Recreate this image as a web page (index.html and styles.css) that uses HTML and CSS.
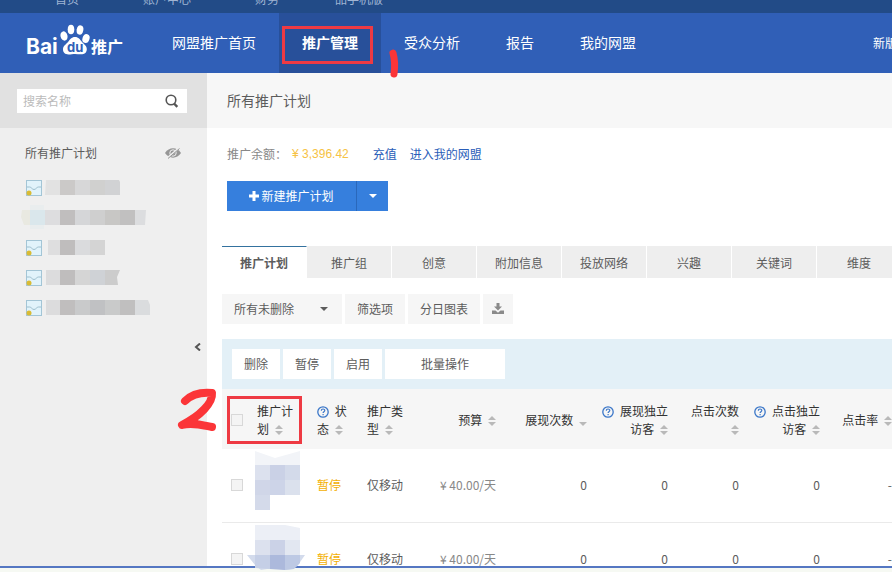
FILE: index.html
```html
<!DOCTYPE html>
<html lang="zh-CN">
<head>
    <meta charset="UTF-8">
    <meta name="viewport" content="width=device-width, initial-scale=1.0">
    <title>百度推广 - 推广管理</title>
    <link rel="stylesheet" href="styles.css">
</head>
<body>
    <!-- Shared icons -->
    <svg class="sprite" aria-hidden="true">
        <symbol id="icon-plan" viewBox="0 0 16 16">
            <rect x="0.5" y="0.5" width="15" height="15" fill="#e1f3fb" stroke="#a3c5d6"/>
            <path d="M1 7h2.500c2 0 2.500 2.500 4.500 2.500S10.500 7 12.500 7H15" fill="none" stroke="#9dbfce"/>
            <circle cx="3" cy="13" r="2.500" fill="#d9bb34"/>
        </symbol>
        <symbol id="icon-sort" viewBox="0 0 8 10">
            <path d="M4 0l4 4H0zM4 10L0 6h8z" fill="#b9b9b9"/>
        </symbol>
        <symbol id="icon-sort-desc" viewBox="0 0 8 10">
            <path d="M4 10L0 6h8z" fill="#b9b9b9"/>
        </symbol>
        <symbol id="icon-help" viewBox="0 0 12 12">
            <circle cx="6" cy="6" r="5.200" fill="none" stroke="#3a76c8" stroke-width="1.300"/>
            <path d="M4.300 4.700c0-2.200 3.500-2.200 3.500-.2 0 1.200-1.700 1.200-1.700 2.500M6.100 8v1.200" fill="none" stroke="#3a76c8" stroke-width="1.200"/>
        </symbol>
    </svg>

    <div class="topbar">
        <a href="#">首页</a>
        <a href="#">账户中心</a>
        <a href="#">财务</a>
        <a class="mobile" href="#">品手机版</a>
    </div>

    <header class="header">
        <a class="logo" href="#" aria-label="百度推广">
            <svg width="98" height="34" viewBox="0 3 98 34">
                <g fill="#fff">
                    <text class="logo-latin" x="-1" y="31">Bai</text>
                    <ellipse cx="37" cy="13" rx="3.500" ry="4.700" transform="rotate(-14 37 13)"/>
                    <ellipse cx="44" cy="6.500" rx="3.300" ry="4.700"/>
                    <ellipse cx="53" cy="7" rx="3.300" ry="4.700" transform="rotate(12 53 7)"/>
                    <ellipse cx="59" cy="15.500" rx="3.500" ry="4.600" transform="rotate(18 59 15.500)"/>
                    <path d="M48 14c3.500 0 5 2.500 7 5 2.500 2.700 5 4 4.800 7.500-.3 4-3.300 5-6 4.800-2-.1-3.800-.4-5.800-.4s-4 .6-6.500.6c-3.500 0-5.500-2-5.500-5.200 0-3.500 3-4.800 5.200-7.500 1.800-2.300 3.300-4.800 6.800-4.800z"/>
                    <text class="logo-cn" x="64" y="30">推广</text>
                </g>
                <text class="logo-du" x="40" y="29">du</text>
            </svg>
        </a>
        <nav class="nav">
            <a href="#">网盟推广首页</a>
            <a class="active" href="#">推广管理</a>
            <a href="#">受众分析</a>
            <a href="#">报告</a>
            <a href="#">我的网盟</a>
        </nav>
        <a class="new-version" href="#">新版</a>
    </header>

    <div class="layout">
        <aside class="sidebar">
            <form class="search">
                <input type="text" placeholder="搜索名称" aria-label="搜索名称">
                <button type="button" aria-label="搜索">
                    <svg width="14" height="14" viewBox="0 0 14 14" fill="none" stroke="#555">
                        <circle cx="6" cy="6" r="4.800" stroke-width="1.600"/>
                        <path d="M9 9.500l3.300 3.300" stroke-width="2.400"/>
                    </svg>
                </button>
            </form>
            <div class="side-title">
                <span>所有推广计划</span>
                <svg width="16" height="12" viewBox="0 0 16 12">
                    <path d="M0 6c4-6.200 12-6.200 16 0-4 6.200-12 6.200-16 0z" fill="#969696"/>
                    <circle cx="8" cy="6" r="3.200" fill="none" stroke="#efefef"/>
                    <path d="M2.500 11L14 1" stroke="#efefef" stroke-width="2"/>
                    <path d="M3 11.500L14.500 1.500" stroke="#969696"/>
                </svg>
            </div>
            <ul class="plan-list">
                <li>
                    <svg width="16" height="16"><use href="#icon-plan"/></svg>
                    <svg width="75" height="15">
                        <path d="M1 0h14v15H0z" fill="#e2e2e2"/>
                        <path d="M15 0h15v15H15z" fill="#cbc9c8"/>
                        <path d="M30 0h15v15H30z" fill="#d7d7d8"/>
                        <path d="M45 0h15v15H45z" fill="#d0d0cf"/>
                        <path d="M60 0h14l1 2v13H60z" fill="#d1d2d4"/>
                    </svg>
                </li>
                <li class="masked">
                    <svg width="125" height="24">
                        <path d="M1 5h8v15H3L0 12z" fill="#e9e9e1"/>
                        <path d="M9 0h14v24H9z" fill="#e9edee"/>
                        <path d="M9 5h15v15H9z" fill="#dae7ec"/>
                        <path d="M24 5h15v15H24z" fill="#dddddf"/>
                        <path d="M39 5h15v15H39z" fill="#c0bebe"/>
                        <path d="M54 5h15v15H54z" fill="#d5d6d8"/>
                        <path d="M69 5h15v15H69z" fill="#cfcfcf"/>
                        <path d="M84 5h15v15H84z" fill="#c8c7c5"/>
                        <path d="M99 5h15v15H99z" fill="#c1c0c0"/>
                        <path d="M114 5h11l-1 15h-10z" fill="#dcdddf"/>
                    </svg>
                </li>
                <li>
                    <svg width="16" height="16"><use href="#icon-plan"/></svg>
                    <svg width="60" height="15">
                        <path d="M3 0h12v15H3z" fill="#dededf"/>
                        <path d="M15 0h15v15H15z" fill="#bfbdbd"/>
                        <path d="M30 0h15v15H30z" fill="#dadbdd"/>
                        <path d="M45 0h15v15H45z" fill="#d4d4d4"/>
                    </svg>
                </li>
                <li>
                    <svg width="16" height="16"><use href="#icon-plan"/></svg>
                    <svg width="75" height="15">
                        <path d="M1 0h14v15H1z" fill="#dcdcdd"/>
                        <path d="M15 0h15v15H15z" fill="#bfbdbd"/>
                        <path d="M30 0h15v15H30z" fill="#d5d5d5"/>
                        <path d="M45 0h15v15H45z" fill="#cfd2d6"/>
                        <path d="M60 0h15l-3 7 1 8H60z" fill="#cccccc"/>
                    </svg>
                </li>
                <li>
                    <svg width="16" height="16"><use href="#icon-plan"/></svg>
                    <svg width="105" height="15">
                        <path d="M1 0h14v15H1z" fill="#dcdcdd"/>
                        <path d="M15 0h15v15H15z" fill="#c0bebe"/>
                        <path d="M30 0h15v15H30z" fill="#c9cacb"/>
                        <path d="M45 0h15v15H45z" fill="#c0c1c3"/>
                        <path d="M60 0h15v15H60z" fill="#c9caca"/>
                        <path d="M75 0h15v15H75z" fill="#c0bfbf"/>
                        <path d="M90 0h13l2 5v10H90z" fill="#dadcde"/>
                    </svg>
                </li>
            </ul>
            <button class="collapse" type="button" aria-label="收起">
                <svg width="7" height="8" viewBox="0 0 7 8"><path d="M6 .5L2 4l4 3.500" fill="none" stroke="#555" stroke-width="2"/></svg>
            </button>
        </aside>

        <main class="main">
            <h1 class="page-title">所有推广计划</h1>

            <div class="balance">
                <span>推广余额：</span>
                <span class="amount">¥ 3,396.42</span>
                <a href="#">充值</a>
                <a href="#">进入我的网盟</a>
            </div>

            <div class="create">
                <button class="create-main" type="button">
                    <svg width="10" height="10" viewBox="0 0 10 10"><path d="M5 0v10M0 5h10" stroke="#fff" stroke-width="3"/></svg>
                    <span>新建推广计划</span>
                </button>
                <button class="create-more" type="button" aria-label="更多"><span class="caret"></span></button>
            </div>

            <nav class="tabs">
                <a class="active" href="#">推广计划</a>
                <a href="#">推广组</a>
                <a href="#">创意</a>
                <a href="#">附加信息</a>
                <a href="#">投放网络</a>
                <a href="#">兴趣</a>
                <a href="#">关键词</a>
                <a href="#">维度</a>
            </nav>

            <div class="filters">
                <div class="select">
                    <select aria-label="状态筛选">
                        <option>所有未删除</option>
                    </select>
                    <span class="caret"></span>
                </div>
                <button type="button">筛选项</button>
                <button type="button">分日图表</button>
                <button class="download" type="button" aria-label="下载">
                    <svg width="12" height="12" viewBox="0 0 12 12" fill="#8a8a8a">
                        <path d="M4.500 0h3v3.500H10L6 7.500 2 3.500h2.500z"/>
                        <path d="M0 7.500h3.500L6 9.700l2.500-2.200H12V11H0z"/>
                    </svg>
                </button>
            </div>

            <div class="actions">
                <button type="button">删除</button>
                <button type="button">暂停</button>
                <button type="button">启用</button>
                <button class="batch" type="button">批量操作</button>
            </div>

            <table class="plans">
                <colgroup>
                    <col class="col-check">
                    <col class="col-name">
                    <col class="col-status">
                    <col class="col-type">
                    <col class="col-budget">
                    <col class="col-shows">
                    <col class="col-visitors">
                    <col class="col-clicks">
                    <col class="col-visitors">
                    <col class="col-rate">
                </colgroup>
                <thead>
                    <tr>
                        <th class="check"><input type="checkbox" aria-label="全选"></th>
                        <th>推广计<br>划 <svg class="sort"><use href="#icon-sort"/></svg></th>
                        <th><svg class="help"><use href="#icon-help"/></svg> 状<br>态 <svg class="sort"><use href="#icon-sort"/></svg></th>
                        <th>推广类<br>型 <svg class="sort"><use href="#icon-sort"/></svg></th>
                        <th class="num">预算 <svg class="sort"><use href="#icon-sort"/></svg></th>
                        <th class="num">展现次数 <svg class="sort"><use href="#icon-sort-desc"/></svg></th>
                        <th class="num"><svg class="help"><use href="#icon-help"/></svg> 展现独立<br>访客 <svg class="sort"><use href="#icon-sort"/></svg></th>
                        <th class="num">点击次数<br><svg class="sort"><use href="#icon-sort"/></svg></th>
                        <th class="num"><svg class="help"><use href="#icon-help"/></svg> 点击独立<br>访客 <svg class="sort"><use href="#icon-sort"/></svg></th>
                        <th class="num">点击率 <svg class="sort"><use href="#icon-sort"/></svg></th>
                    </tr>
                </thead>
                <tbody>
                    <tr>
                        <td class="check"><input type="checkbox" aria-label="选择计划一"></td>
                        <td class="name">
                            <svg width="50" height="60">
                                <path d="M5 0l20 7 25-7v15H5z" fill="#f2f4f8"/>
                                <path d="M5 14h15v15H5z" fill="#dce1ee"/>
                                <path d="M20 14h15v15H20z" fill="#cad1e6"/>
                                <path d="M35 14h15v15H35z" fill="#d3daea"/>
                                <path d="M5 29h15v15H5z" fill="#d0d6e8"/>
                                <path d="M20 29h15v15H20z" fill="#cdd4e8"/>
                                <path d="M35 29h15v15H35z" fill="#dbe1ed"/>
                                <path d="M5 44h15v15H5z" fill="#d4daea"/>
                            </svg>
                        </td>
                        <td class="paused">暂停</td>
                        <td>仅移动</td>
                        <td class="num budget">¥ 40.00/天</td>
                        <td class="num">0</td>
                        <td class="num">0</td>
                        <td class="num">0</td>
                        <td class="num">0</td>
                        <td class="num">-</td>
                    </tr>
                    <tr>
                        <td class="check"><input type="checkbox" aria-label="选择计划二"></td>
                        <td class="name">
                            <svg width="50" height="60">
                                <path d="M5 0h30l15 3v12H5z" fill="#eceff6"/>
                                <path d="M5 15h15v15H5z" fill="#dce1ee"/>
                                <path d="M20 15h15v15H20z" fill="#cbd2e7"/>
                                <path d="M35 15h15v15H35z" fill="#e2e7f1"/>
                                <path d="M-3 30h58l-7 10-5 4-8 1-12-2-12 2-6-5z" fill="#d3dbec"/>
                                <path d="M5 30h15v14L5 43z" fill="#c5cfe6"/>
                                <path d="M20 30h15v15l-15-1z" fill="#acb9dc"/>
                                <path d="M35 30h15v8l-6 6-9 1z" fill="#bdc9e4"/>
                            </svg>
                        </td>
                        <td class="paused">暂停</td>
                        <td>仅移动</td>
                        <td class="num budget">¥ 40.00/天</td>
                        <td class="num">0</td>
                        <td class="num">0</td>
                        <td class="num">0</td>
                        <td class="num">0</td>
                        <td class="num">-</td>
                    </tr>
                </tbody>
            </table>
        </main>
    </div>

    <div class="bottom-line"></div>

    <!-- Step markers drawn over the page -->
    <div class="mark mark-nav"></div>
    <svg class="mark-one" width="16" height="34" viewBox="0 0 16 34" aria-label="1">
        <path d="M7 7c2 7 2 14 1 21" fill="none" stroke="#fb3538" stroke-width="7" stroke-linecap="round"/>
    </svg>
    <div class="mark mark-table"></div>
    <svg class="mark-two" width="44" height="48" viewBox="0 0 44 48" aria-label="2">
        <path d="M10 14C17 7 26 5 37 6c1 10-12 23-30 32 10-3 20 0 30 2" fill="none" stroke="#fb3538" stroke-width="8" stroke-linecap="round" stroke-linejoin="round"/>
    </svg>
</body>
</html>
```

FILE: styles.css
```css
* {
    box-sizing: border-box;
}

body {
    display: flex;
    flex-direction: column;
    position: relative;
    height: 100vh;
    margin: 0;
    overflow: hidden;
    background-color: #fff;
    color: #5c5c5c;
    font-family: "Noto Sans CJK SC", sans-serif;
    font-size: 12px;
    line-height: 18px;
}

a {
    color: #2a5db8;
    text-decoration: none;
}

button,
input,
select {
    margin: 0;
    padding: 0;
    border: none;
    border-radius: 0;
    color: inherit;
    font: inherit;
}

button {
    cursor: pointer;
}

svg {
    flex: none;
}

.sprite {
    position: absolute;
    width: 0;
    height: 0;
}

.caret {
    border: 4px solid transparent;
    border-top-color: currentColor;
    border-bottom: none;
}

/* Top bar and header */
.topbar {
    display: flex;
    flex: none;
    align-items: flex-end;
    gap: 64px;
    height: 13px;
    padding: 0 55px 5px;
    overflow: hidden;
    background-color: #224b87;
}

.topbar a {
    color: #9fb4d3;
}

.topbar .mobile {
    margin-left: -8px;
}

.header {
    display: flex;
    flex: none;
    align-items: center;
    height: 60px;
    overflow: hidden;
    background-color: #305fb7;
}

.logo {
    display: flex;
    flex: none;
    width: 149px;
    padding-left: 27px;
}

.logo svg {
    overflow: visible;
}

.logo-latin {
    font: bold 21px Inter, sans-serif;
}

.logo-du {
    fill: #305fb7;
    font: bold 13px Inter, sans-serif;
}

.logo-cn {
    font: bold 16px "Noto Sans CJK SC", sans-serif;
}

.nav {
    display: flex;
    flex: 1;
}

.nav a {
    flex: none;
    padding: 0 23px 2px;
    color: #fff;
    font-size: 14px;
    line-height: 58px;
}

.nav .active {
    background-color: #28509a;
    font-weight: bold;
}

.new-version {
    flex: none;
    width: 19px;
    overflow: hidden;
    color: #fff;
    white-space: nowrap;
}

.layout {
    display: flex;
    flex: 1;
    min-height: 0;
}

/* Sidebar */
.sidebar {
    flex: none;
    width: 207px;
    background-color: #efefef;
}

.search {
    display: flex;
    height: 55px;
    padding: 16px 20px 15px 17px;
    background-color: #e1e1e1;
}

.search input {
    flex: 1;
    min-width: 0;
    padding-left: 6px;
    background-color: #fff;
}

.search input::placeholder {
    color: #bbb;
}

.search button {
    display: flex;
    align-items: center;
    justify-content: center;
    width: 30px;
    background-color: #fff;
}

.side-title {
    display: flex;
    align-items: center;
    justify-content: space-between;
    height: 30px;
    margin-top: 10px;
    padding: 0 26px 0 25px;
}

.plan-list {
    margin: 5px 0 0;
    padding: 0 0 0 26px;
    list-style: none;
}

.plan-list li {
    display: flex;
    align-items: flex-start;
    gap: 3px;
    height: 30px;
    padding-top: 7px;
}

.plan-list .masked {
    margin-left: -5px;
    padding-top: 2px;
}

.collapse {
    display: flex;
    margin: 20px 6px 0 auto;
    background: none;
}

/* Main column */
.main {
    flex: 1;
    min-width: 0;
    overflow-x: clip;
}

.page-title {
    height: 55px;
    margin: 0;
    padding-left: 20px;
    background-color: #f7f7f7;
    font-size: 14px;
    font-weight: normal;
    line-height: 55px;
}

.balance {
    display: flex;
    margin: 17px 0 18px;
    padding-left: 20px;
    color: #888;
}

.balance a {
    margin-right: 13px;
}

.amount {
    margin: 0 24px 0 5px;
    color: #f6c244;
    font-family: "Liberation Sans", sans-serif;
}

.create {
    display: flex;
    height: 30px;
    padding-left: 20px;
    color: #fff;
}

.create button {
    display: flex;
    align-items: center;
    justify-content: center;
    gap: 2px;
    background-color: #367fdd;
}

.create-main {
    width: 129px;
}

.create .create-more {
    width: 32px;
    border-left: 1px solid #2a68bb;
}

.tabs {
    display: flex;
    margin: 35px 0 0 15px;
}

.tabs a {
    flex: none;
    width: 85px;
    height: 32px;
    border-right: 1px solid #fff;
    background-color: #eee;
    color: #5c5c5c;
    line-height: 34px;
    text-align: center;
}

.tabs .active {
    border-top: 1px solid #34729f;
    background-color: #fff;
    font-weight: bold;
    line-height: 32px;
}

.filters {
    display: flex;
    gap: 3px;
    height: 30px;
    margin: 16px 0 15px;
    padding-left: 15px;
}

.filters button {
    padding: 0 12px;
    background-color: #f6f6f6;
}

.select {
    display: grid;
    align-items: center;
    width: 120px;
    background-color: #f6f6f6;
}

.select select,
.select .caret {
    grid-area: 1 / 1;
}

.select select {
    width: 100%;
    height: 30px;
    padding-left: 12px;
    appearance: none;
    background: none;
}

.select .caret {
    justify-self: end;
    margin-right: 14px;
    pointer-events: none;
}

.filters .download {
    display: flex;
    align-items: center;
    padding: 0 9px;
}

.actions {
    display: flex;
    gap: 3px;
    height: 50px;
    margin-left: 15px;
    padding: 10px;
    background-color: #e3f0f7;
}

.actions button {
    padding: 0 12px;
    background-color: #fff;
}

.actions .batch {
    width: 120px;
}

/* Plans table */
.plans {
    width: calc(100% - 5px);
    min-width: 680px;
    margin-left: 15px;
    border-collapse: collapse;
    table-layout: fixed;
}

.col-check { width: 25px; }
.col-name { width: 60px; }
.col-status { width: 50px; }
.col-type { width: 60px; }
.col-budget { width: 89px; }
.col-shows { width: 91px; }
.col-visitors { width: 81px; }
.col-clicks { width: 71px; }
.col-rate { width: 72px; }

.plans th,
.plans td {
    padding: 0 0 0 10px;
    text-align: left;
    white-space: nowrap;
}

.plans th {
    height: 60px;
    padding-top: 2px;
    background-color: #f6f6f6;
    color: #333;
    font-weight: normal;
}

.plans td {
    height: 73px;
    border-bottom: 1px solid #eaeaea;
}

.plans .num {
    padding-right: 10px;
    padding-left: 0;
    text-align: right;
}

.plans .check {
    padding-left: 9px;
}

.plans .name {
    padding: 2px 0 0 3px;
    vertical-align: top;
}

/* The name preview may run over the bottom line */
.plans .name svg {
    display: block;
    position: relative;
    overflow: visible;
}

.plans .paused {
    color: #f3b004;
}

.plans .budget {
    color: #888;
}

.check input {
    display: block;
    width: 12px;
    height: 12px;
    border: 1px solid #d8d8d8;
    appearance: none;
    background-color: #f4f4f4;
}

.sort {
    width: 8px;
    height: 10px;
    margin-left: 3px;
    vertical-align: -1px;
}

.help {
    width: 12px;
    height: 12px;
    margin-right: 3px;
    vertical-align: -2px;
}

.bottom-line {
    flex: none;
    height: 6px;
    border-top: 2px solid #5577c2;
    background-color: #f6f9f3;
}

/* Step markers */
.mark {
    position: absolute;
    border: 3px solid #ee3a43;
}

.mark-nav {
    top: 26px;
    left: 282px;
    width: 91px;
    height: 38px;
}

.mark-table {
    top: 396px;
    left: 227px;
    width: 75px;
    height: 48px;
}

.mark-one {
    position: absolute;
    top: 46px;
    left: 386px;
}

.mark-two {
    position: absolute;
    top: 387px;
    left: 175px;
}
```
